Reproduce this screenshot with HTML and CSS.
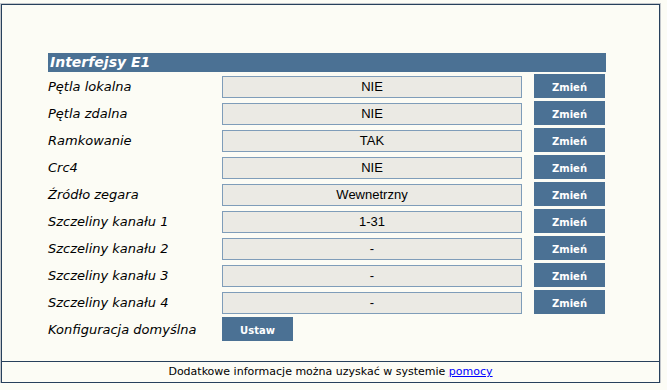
FILE: index.html
```html
<!DOCTYPE html>
<html lang="pl">
<head>
<meta charset="utf-8">
<title>Interfejsy E1</title>
<link rel="stylesheet" href="styles.css">
</head>
<body>
<div class="frame">
  <div class="main">
    <div class="panel">
      <div class="panel-title">Interfejsy E1</div>
      <div class="row"><span class="label">Pętla lokalna</span><span class="value">NIE</span><span class="btn">Zmień</span></div>
      <div class="row"><span class="label">Pętla zdalna</span><span class="value">NIE</span><span class="btn">Zmień</span></div>
      <div class="row"><span class="label">Ramkowanie</span><span class="value">TAK</span><span class="btn">Zmień</span></div>
      <div class="row"><span class="label">Crc4</span><span class="value">NIE</span><span class="btn">Zmień</span></div>
      <div class="row"><span class="label">Źródło zegara</span><span class="value">Wewnetrzny</span><span class="btn">Zmień</span></div>
      <div class="row"><span class="label">Szczeliny kanału 1</span><span class="value">1-31</span><span class="btn">Zmień</span></div>
      <div class="row"><span class="label">Szczeliny kanału 2</span><span class="value">-</span><span class="btn">Zmień</span></div>
      <div class="row"><span class="label">Szczeliny kanału 3</span><span class="value">-</span><span class="btn">Zmień</span></div>
      <div class="row"><span class="label">Szczeliny kanału 4</span><span class="value">-</span><span class="btn">Zmień</span></div>
      <div class="row"><span class="label">Konfiguracja domyślna</span><span class="btn btn-set">Ustaw</span></div>
    </div>
  </div>
  <div class="footer">Dodatkowe informacje można uzyskać w systemie <a href="#">pomocy</a></div>
</div>
</body>
</html>
```

FILE: styles.css
```css
html, body {
  margin: 0;
  padding: 0;
  background: #fcfcf5;
}
body {
  font-family: "DejaVu Sans", Verdana, sans-serif;
  color: #000;
}
.frame {
  box-sizing: border-box;
  margin: 4px 0 0 1px;
  width: 659px;
  height: 379px;
  border: 1px solid #27405c;
  outline: 1px solid #c3c7cb;
  display: flex;
  flex-direction: column;
  background: #fcfcf5;
}
.main {
  flex: 1;
  padding: 48px 0 0 46px;
}
.panel {
  width: 558px;
}
.panel-title {
  height: 19px;
  line-height: 19px;
  background: #4b7194;
  color: #fff;
  font-size: 14px;
  font-weight: bold;
  font-style: italic;
  padding-left: 2px;
}
.row {
  display: flex;
  align-items: flex-end;
  height: 27px;
  box-sizing: border-box;
  padding-bottom: 1px;
}
.label {
  width: 174px;
  flex: none;
  height: 22px;
  line-height: 22px;
  font-size: 13px;
  font-style: italic;
  white-space: nowrap;
}
.value {
  box-sizing: border-box;
  width: 300px;
  height: 22px;
  line-height: 20px;
  border: 1px solid #7f9db9;
  background: #ebeae4;
  text-align: center;
  font-family: "Liberation Sans", Arial, sans-serif;
  font-size: 13px;
}
.btn {
  box-sizing: border-box;
  width: 71px;
  height: 24px;
  padding-top: 4px;
  line-height: 20px;
  margin-left: 12px;
  background: #4b7194;
  color: #fff;
  font-size: 10px;
  font-weight: bold;
  text-align: center;
}
.btn-set {
  margin-left: 0;
}
.footer {
  height: 20px;
  line-height: 20px;
  border-top: 1px solid #27405c;
  text-align: center;
  font-size: 11px;
}
.footer a {
  color: #0000ff;
  text-decoration: underline;
}
```
